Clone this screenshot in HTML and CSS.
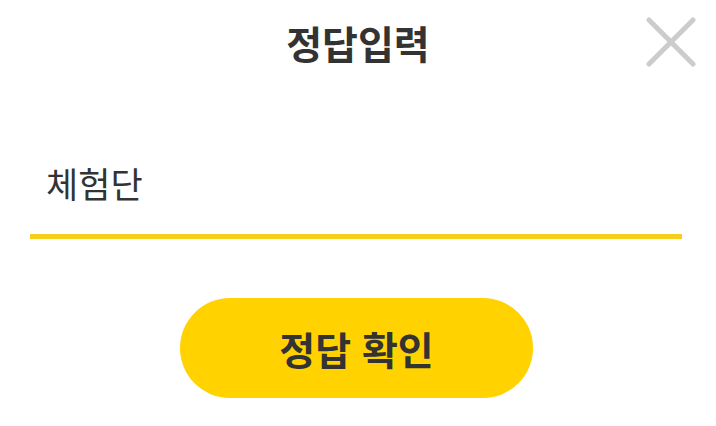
FILE: index.html
```html
<!DOCTYPE html>
<html lang="ko">
<head>
<meta charset="utf-8">
<link rel="stylesheet" href="styles.css">
</head>
<body>
<div class="dialog">
  <header class="header">
    <span class="spacer"></span>
    <h1 class="title">정답입력</h1>
    <button class="close" aria-label="닫기">
      <svg width="50" height="50" viewBox="0 0 50 50"><path d="M3 3 L47 47 M47 3 L3 47" stroke="#cccccc" stroke-width="5" stroke-linecap="round" fill="none"/></svg>
    </button>
  </header>
  <div class="field"><span class="value">체험단</span></div>
  <div class="actions"><button class="submit">정답 확인</button></div>
</div>
</body>
</html>
```
FILE: styles.css
```css
html, body {
  margin: 0;
  padding: 0;
  background: #ffffff;
}
body {
  width: 716px;
  height: 426px;
  overflow: hidden;
  font-family: "Noto Sans CJK KR", "Noto Sans", sans-serif;
  color: #333333;
}
.dialog {
  display: flex;
  flex-direction: column;
}
.header {
  display: grid;
  grid-template-columns: 1fr auto 1fr;
  align-items: center;
  height: 84px;
}
.title {
  margin: 0;
  font-size: 39px;
  font-weight: 700;
  line-height: 1;
  color: #333333;
}
.close {
  justify-self: end;
  margin-right: 20px;
  padding: 0;
  border: 0;
  background: none;
  width: 50px;
  height: 50px;
  display: flex;
}
.field {
  margin: 77px 34px 0 30px;
  padding: 0 0 29px 16px;
  border-bottom: 5px solid #f6cf1b;
  display: flex;
  height: 44px;
  align-items: center;
}
.value {
  font-size: 35px;
  line-height: 44px;
  color: #333333;
}
.actions {
  display: flex;
  justify-content: center;
  margin-top: 59px;
}
.submit {
  width: 353px;
  height: 100px;
  margin-right: 3px;
  border: 0;
  border-radius: 50px;
  background: #ffd200;
  font-family: "Noto Sans CJK KR", "Noto Sans", sans-serif;
  font-size: 39px;
  font-weight: 700;
  color: #333333;
  padding: 0;
}
```
